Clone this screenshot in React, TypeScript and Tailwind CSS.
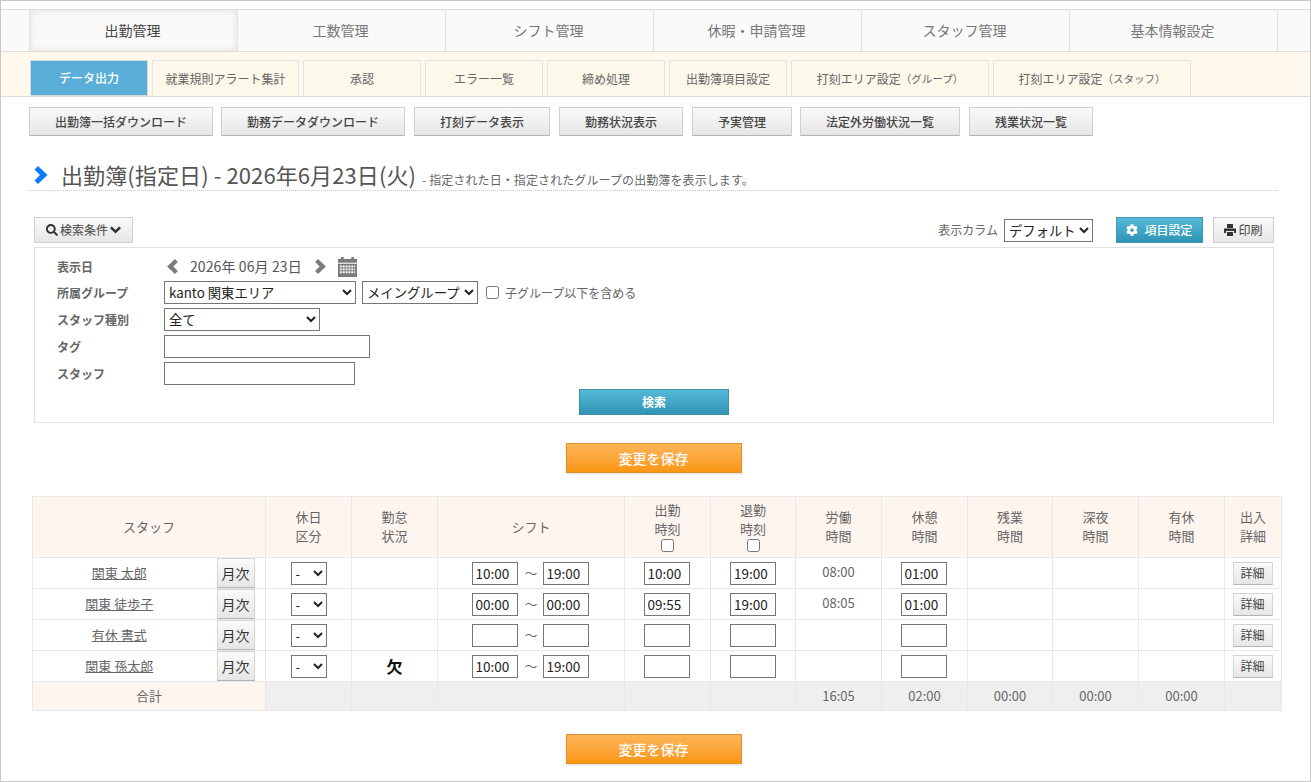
import { FaCog, FaSearch } from 'react-icons/fa';

const mainNav = ['出勤管理', '工数管理', 'シフト管理', '休暇・申請管理', 'スタッフ管理', '基本情報設定'];

const actions = [
  { label: '出勤簿一括ダウンロード', w: 'w-[184px]', mr: 'mr-2' },
  { label: '勤務データダウンロード', w: 'w-[184px]', mr: 'mr-[9px]' },
  { label: '打刻データ表示', w: 'w-[136px]', mr: 'mr-[9px]' },
  { label: '勤務状況表示', w: 'w-[124px]', mr: 'mr-[9px]' },
  { label: '予実管理', w: 'w-[100px]', mr: 'mr-2' },
  { label: '法定外労働状況一覧', w: 'w-[160px]', mr: 'mr-[9px]' },
  { label: '残業状況一覧', w: 'w-[124px]', mr: '' },
];

const rows = [
  { name: '関東 太郎', from: '10:00', to: '19:00', start: '10:00', end: '19:00', work: '08:00', rest: '01:00', mark: '' },
  { name: '関東 徒歩子', from: '00:00', to: '00:00', start: '09:55', end: '19:00', work: '08:05', rest: '01:00', mark: '' },
  { name: '有休 書式', from: '', to: '', start: '', end: '', work: '', rest: '', mark: '' },
  { name: '関東 孫太郎', from: '10:00', to: '19:00', start: '', end: '', work: '', rest: '', mark: '欠' },
];

function TimeInput({ value }: { value: string }) {
  return (
    <input
      readOnly
      value={value}
      className="h-[23px] w-[46px] border border-[#767676] bg-white px-[3px] text-[13.5px] text-[#222] outline-none"
    />
  );
}

function Th({ children }: { children: React.ReactNode }) {
  return <th className="border border-[#e8e8e8] bg-[#fff5ef] pb-[2px] text-[13px] leading-[19px] font-normal text-[#666]">{children}</th>;
}

function Td({ children }: { children?: React.ReactNode }) {
  return <td className="border border-[#e8e8e8] text-center text-[13px] text-[#666]">{children}</td>;
}

function SaveButton() {
  return (
    <button className="h-[30px] w-[176px] border border-[#e0902c] bg-linear-to-b from-[#fdb556] to-[#fb960c] text-[14px] font-medium text-white shadow-[0_1px_2px_rgba(0,0,0,0.15)]">
      変更を保存
    </button>
  );
}

function ChevronRight({ className }: { className: string }) {
  return (
    <svg viewBox="0 0 14 18" className={className} fill="currentColor">
      <path d="M4 0 13.5 9 4 18 0.5 14.5 6 9 0.5 3.5z" />
    </svg>
  );
}

function ChevronLeft({ className }: { className: string }) {
  return (
    <svg viewBox="0 0 14 18" className={className} fill="currentColor">
      <path d="M10 0 0.5 9 10 18 13.5 14.5 8 9 13.5 3.5z" />
    </svg>
  );
}

function ChevronDown() {
  return (
    <svg width="11" height="8" viewBox="0 0 11 8" fill="#333">
      <path d="M0 2.2 1.8 0.4 5.5 4 9.2 0.4 11 2.2 5.5 7.6z" />
    </svg>
  );
}

function PrintIcon() {
  return (
    <svg width="12" height="12" viewBox="0 0 12 12" fill="#333">
      <path d="M3 0h6v4H3z" />
      <path d="M0 4.5h12V9H10V7H2v2H0z" />
      <path d="M3 8h6v4H3z" />
    </svg>
  );
}

function CalendarIcon() {
  return (
    <svg width="19" height="20" viewBox="0 0 20 21" fill="#7b7b7b" className="block">
      <rect x="3" y="0" width="3" height="4" />
      <rect x="14" y="0" width="3" height="4" />
      <rect x="0" y="2" width="20" height="4" />
      <path d="M0 7h20v14H0z M2 9v2h2V9z M5 9v2h2V9z M8 9v2h2V9z M11 9v2h2V9z M14 9v2h2V9z M17 9v2h1V9z M2 12v2h2v-2z M5 12v2h2v-2z M8 12v2h2v-2z M11 12v2h2v-2z M14 12v2h2v-2z M17 12v2h1v-2z M2 15v2h2v-2z M5 15v2h2v-2z M8 15v2h2v-2z M11 15v2h2v-2z M14 15v2h2v-2z M17 15v2h1v-2z" fillRule="evenodd" />
    </svg>
  );
}

export default function App() {
  return (
    <div className="h-[782px] w-[1311px] overflow-hidden border border-[#c8c8c8] bg-white pt-2 font-['Noto_Sans_CJK_JP','Noto_Sans',sans-serif] text-[#555]">
      {/* Main nav */}
      <div className="flex h-[43px] border-y border-[#dcdcdc] bg-[#fafafa] pl-[28px]">
        {mainNav.map((item, idx) => (
          <div
            key={item}
            className={
              idx === 0
                ? 'flex w-[209px] items-center justify-center border-x border-[#e2e2e2] pr-[2px] text-[14px] text-[#444] shadow-[inset_0_0_8px_rgba(0,0,0,0.1)]'
                : 'flex w-[208px] items-center justify-center border-r border-[#e2e2e2] pr-[2px] text-[14px] text-[#777]'
            }
          >
            {item}
          </div>
        ))}
      </div>

      {/* Sub nav */}
      <div className="flex h-[45px] items-end gap-1 border-b border-[#dcdcdc] bg-[#fef9ec] pl-[29px]">
        <div className="flex h-9 w-[118px] items-center justify-center border border-[#d8d8d8] bg-[#5aaed8] text-[12px] font-medium text-white">データ出力</div>
        <SubTab w="w-[147px]">就業規則アラート集計</SubTab>
        <SubTab w="w-[118px]">承認</SubTab>
        <SubTab w="w-[118px]">エラー一覧</SubTab>
        <SubTab w="w-[118px]">締め処理</SubTab>
        <SubTab w="w-[118px]">出勤簿項目設定</SubTab>
        <SubTab w="w-[198px]">打刻エリア設定<span className="text-[10.5px]">（グループ）</span></SubTab>
        <SubTab w="w-[198px]">打刻エリア設定<span className="text-[10.5px]">（スタッフ）</span></SubTab>
      </div>

      {/* Action buttons */}
      <div className="mt-[10px] flex pl-[28px]">
        {actions.map((a) => (
          <button
            key={a.label}
            className={`h-[29px] border border-[#cfcfcf] border-b-[#b5b5b5] bg-linear-to-b from-[#fafafa] to-[#e6e6e6] text-[12px] font-medium text-[#444] ${a.w} ${a.mr}`}
          >
            {a.label}
          </button>
        ))}
      </div>

      {/* Title */}
      <div className="mt-[18px] mr-[32px] ml-[28px] flex h-[37px] items-center border-b border-dotted border-[#c8c8c8] pl-[5px]">
        <ChevronRight className="mt-[6px] mr-[13px] h-[18px] w-[14px] text-[#0a7cff]" />
        <h1 className="mt-1 text-[22px] font-normal tracking-[0.1px] text-[#555]">出勤簿(指定日) - 2026年6月23日(火)</h1>
        <span className="mt-[15px] ml-[6px] text-[12px] tracking-[0.1px] text-[#666]">- 指定された日・指定されたグループの出勤簿を表示します。</span>
      </div>

      {/* Search toolbar */}
      <div className="mt-[26px] ml-[33px] flex h-[26px] w-[1240px] items-center">
        <button className="flex h-[26px] w-[99px] items-center justify-center gap-[2px] border border-[#cfcfcf] bg-linear-to-b from-[#fafafa] to-[#e6e6e6] text-[12px] text-[#444]">
          <FaSearch className="text-[12px] text-[#333]" />
          検索条件
          <ChevronDown />
        </button>
        <span className="mr-[6px] ml-auto text-[12px] text-[#666]">表示カラム</span>
        <select className="h-[23px] w-[89px] border border-[#767676] bg-white text-[13.33px] text-[#222]">
          <option>デフォルト</option>
        </select>
        <button className="ml-[23px] flex h-[26px] w-[87px] items-center justify-center gap-[6px] border border-[#3f9ab8] bg-linear-to-b from-[#54bad9] to-[#2f93b3] text-[12px] font-medium text-white">
          <FaCog className="text-[12px]" />
          項目設定
        </button>
        <button className="ml-[10px] flex h-[26px] w-[61px] items-center justify-center gap-[2px] border border-[#cfcfcf] bg-linear-to-b from-[#fafafa] to-[#e6e6e6] text-[12px] text-[#444]">
          <PrintIcon />
          印刷
        </button>
      </div>

      {/* Search panel */}
      <div className="mt-1 ml-[33px] h-[176px] w-[1240px] border border-[#e0e0e0] pt-2 pl-[22px]">
        <div className="flex flex-col gap-1">
          <FormRow label="表示日" h="h-[21px]">
            <ChevronLeft className="ml-[2px] h-[15px] w-[13px] text-[#7b7b7b]" />
            <span className="ml-[11px] text-[14px] tracking-[0.1px] text-[#555]">2026年 06月 23日</span>
            <ChevronRight className="ml-[12px] h-[15px] w-[13px] text-[#7b7b7b]" />
            <span className="ml-[11px]"><CalendarIcon /></span>
          </FormRow>
          <FormRow label="所属グループ">
            <select className="h-[23px] w-[192px] border border-[#767676] bg-white text-[13.33px] text-[#222]">
              <option>kanto 関東エリア</option>
            </select>
            <select className="ml-[6px] h-[23px] w-[116px] border border-[#767676] bg-white text-[13.33px] text-[#222]">
              <option>メイングループ</option>
            </select>
            <input type="checkbox" className="ml-2 h-[13px] w-[13px]" />
            <span className="ml-[6px] text-[12px] text-[#666]">子グループ以下を含める</span>
          </FormRow>
          <FormRow label="スタッフ種別">
            <select className="h-[23px] w-[156px] border border-[#767676] bg-white text-[13.33px] text-[#222]">
              <option>全て</option>
            </select>
          </FormRow>
          <FormRow label="タグ">
            <input readOnly className="h-[23px] w-[206px] border border-[#767676] bg-white" />
          </FormRow>
          <FormRow label="スタッフ">
            <input readOnly className="h-[23px] w-[191px] border border-[#767676] bg-white" />
          </FormRow>
        </div>
        <div className="mt-1 ml-[522px]">
          <button className="block h-[26px] w-[150px] border border-[#3f8fa9] bg-linear-to-b from-[#54bad9] to-[#2f93b3] text-[12px] font-bold text-white">検索</button>
        </div>
      </div>

      <div className="mt-5 flex justify-center">
        <div className="mr-1"><SaveButton /></div>
      </div>

      {/* Attendance table */}
      <table className="mt-[23px] ml-[31px] w-[1249px] table-fixed border-collapse">
        <colgroup>
          <col className="w-[185px]" />
          <col className="w-[48px]" />
          <col className="w-[86px]" />
          <col className="w-[86px]" />
          <col className="w-[187px]" />
          <col className="w-[86px]" />
          <col className="w-[85px]" />
          <col className="w-[86px]" />
          <col className="w-[86px]" />
          <col className="w-[85px]" />
          <col className="w-[86px]" />
          <col className="w-[86px]" />
          <col className="w-[57px]" />
        </colgroup>
        <thead>
          <tr className="h-[61px]">
            <th colSpan={2} className="border border-[#e8e8e8] bg-[#fff5ef] text-[13px] font-normal text-[#666]">スタッフ</th>
            <Th>休日<br />区分</Th>
            <Th>勤怠<br />状況</Th>
            <Th>シフト</Th>
            <Th>
              <div className="flex flex-col items-center">
                出勤<br />時刻
                <input type="checkbox" className="mt-px h-[13px] w-[13px]" />
              </div>
            </Th>
            <Th>
              <div className="flex flex-col items-center">
                退勤<br />時刻
                <input type="checkbox" className="mt-px h-[13px] w-[13px]" />
              </div>
            </Th>
            <Th>労働<br />時間</Th>
            <Th>休憩<br />時間</Th>
            <Th>残業<br />時間</Th>
            <Th>深夜<br />時間</Th>
            <Th>有休<br />時間</Th>
            <Th>出入<br />詳細</Th>
          </tr>
        </thead>
        <tbody>
          {rows.map((r) => (
            <tr key={r.name} className="h-[31px]">
              <td className="border-y border-l border-[#e8e8e8] pr-3 text-center text-[13px] text-[#666] underline">{r.name}</td>
              <td className="border-y border-r border-[#e8e8e8] p-0">
                <button className="-ml-px block h-[30px] w-[38px] border border-[#d4d4d4] border-b-[#b5b5b5] bg-linear-to-b from-[#fafafa] to-[#e6e6e6] text-[14px] text-[#333]">月次</button>
              </td>
              <td className="border border-[#e8e8e8]">
                <div className="flex justify-center">
                  <select className="h-[23px] w-9 border border-[#767676] bg-white text-[13px] text-[#222]">
                    <option>-</option>
                  </select>
                </div>
              </td>
              <td className="border border-[#e8e8e8] text-center text-[16px] leading-none font-bold text-[#111]">{r.mark}</td>
              <td className="border border-[#e8e8e8]">
                <div className="flex items-center justify-center pr-[2px]">
                  <TimeInput value={r.from} />
                  <span className="w-[25px] pl-[2px] text-center text-[13px] text-[#666]">～</span>
                  <TimeInput value={r.to} />
                </div>
              </td>
              <td className="border border-[#e8e8e8]">
                <div className="flex justify-center pr-[2px]"><TimeInput value={r.start} /></div>
              </td>
              <td className="border border-[#e8e8e8]">
                <div className="flex justify-center"><TimeInput value={r.end} /></div>
              </td>
              <td className="border border-[#e8e8e8] pb-[2px] text-center text-[13px] text-[#666]">{r.work}</td>
              <td className="border border-[#e8e8e8]">
                <div className="flex justify-center pr-[2px]"><TimeInput value={r.rest} /></div>
              </td>
              <Td />
              <Td />
              <Td />
              <td className="border border-[#e8e8e8]">
                <div className="flex justify-center pr-[1px]">
                  <button className="h-[23px] w-10 border border-[#d4d4d4] border-b-[#b5b5b5] bg-linear-to-b from-[#fafafa] to-[#e6e6e6] text-[12px] text-[#444]">詳細</button>
                </div>
              </td>
            </tr>
          ))}
          <tr className="h-[29px] bg-[#efefef]">
            <td colSpan={2} className="border border-[#e8e8e8] bg-[#fff5ef] text-center text-[13px] text-[#666]">合計</td>
            <Td />
            <Td />
            <Td />
            <Td />
            <Td />
            <Td>16:05</Td>
            <Td>02:00</Td>
            <Td>00:00</Td>
            <Td>00:00</Td>
            <Td>00:00</Td>
            <Td />
          </tr>
        </tbody>
      </table>

      <div className="mt-[23px] flex justify-center">
        <div className="mr-1"><SaveButton /></div>
      </div>
    </div>
  );
}

function SubTab({ w, children }: { w: string; children: React.ReactNode }) {
  return (
    <div className={`flex h-9 items-center justify-center border-x border-t border-[#e2e2e2] bg-[#fcf8ea] text-[12px] text-[#666] ${w}`}>
      {children}
    </div>
  );
}

function FormRow({ label, h = 'h-[23px]', children }: { label: string; h?: string; children: React.ReactNode }) {
  return (
    <div className={`flex items-center ${h}`}>
      <span className="w-[107px] pt-px text-[12px] font-bold text-[#666]">{label}</span>
      {children}
    </div>
  );
}
